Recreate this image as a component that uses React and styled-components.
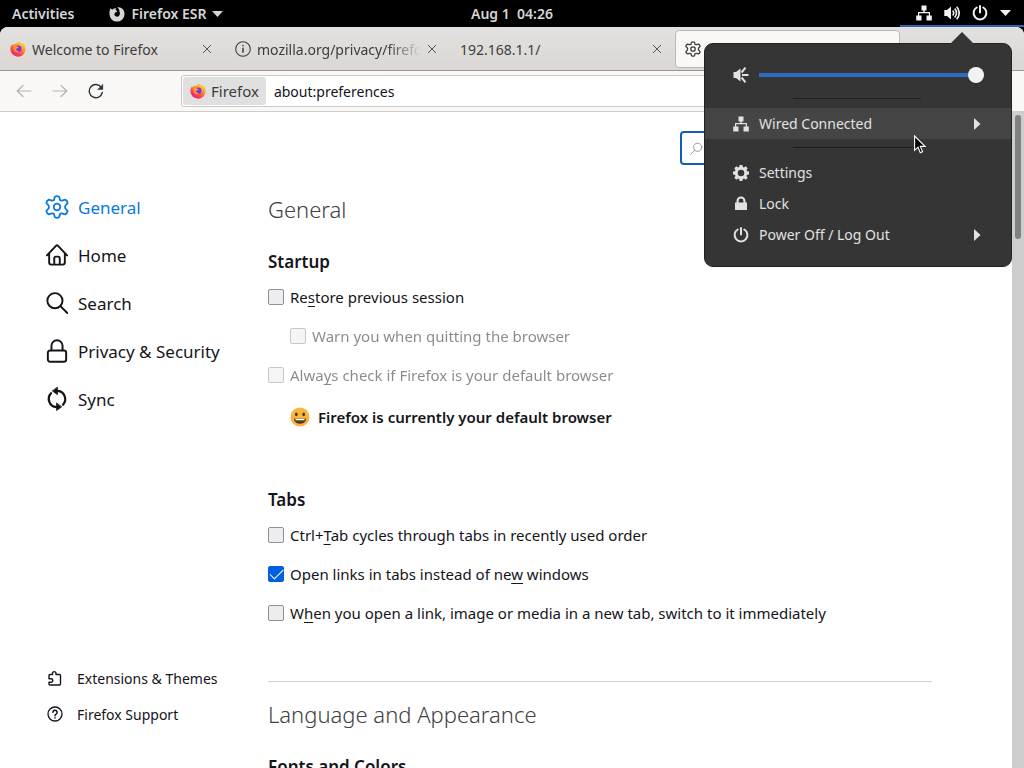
import React from 'react'
import styled, { createGlobalStyle, css } from 'styled-components'

const GlobalStyle = createGlobalStyle`
  * {
    box-sizing: border-box;
  }

  body {
    margin: 0;
    background: #000;
    color: #15141a;
    font-family: "Noto Sans", "Open Sans", sans-serif;
    font-size: 15px;
    overflow: hidden;
  }

  button, input {
    font: inherit;
    color: inherit;
  }

  button {
    border: 0;
    padding: 0;
    background: none;
  }

  h1, h2, p {
    margin: 0;
  }
`
const Desktop = styled.div`
  position: relative;
  display: flex;
  flex-direction: column;
  height: 100vh;
`

/* Top panel */
const TopBar = styled.header`
  display: grid;
  grid-template-columns: 1fr auto 1fr;
  height: 27px;
  color: #d6d6d6;
  font-size: 14px;
  font-weight: 600;
  line-height: 27px;
`
const TopGroup = styled.div`
  display: flex;
  gap: 35px;
  padding-left: 12px;
`
const TopButton = styled.button`
  display: flex;
  align-items: center;
  gap: 6px;
  line-height: 27px;
`
const StatusButton = styled.button`
  display: flex;
  align-items: center;
  justify-self: end;
  gap: 12px;
  width: 124px;
  padding-left: 16px;
  border-bottom: 2px solid #2f62b5;
  color: #f2f2f2;
`

/* Browser window */
const Window = styled.div`
  flex: 1;
  min-height: 0;
  display: flex;
  flex-direction: column;
  border-radius: 8px 8px 0 0;
  background: #fff;
  overflow: hidden;
`
const TabStrip = styled.nav`
  display: flex;
  flex: none;
  height: 44px;
  padding: 3px 0 2px;
  background: linear-gradient(#e3e1df, #dad7d4);
  border-bottom: 1px solid #9c9792;
`
const Tab = styled.div`
  display: flex;
  align-items: center;
  gap: 6px;
  flex: 0 1 225px;
  min-width: 0;
  padding: 0 12px 0 9px;
  color: #3d3d3d;
  font-size: 14px;
  border: 1px solid transparent;
  border-radius: 4px;

  ${props => props.$active && css`
    background: #f9f8f7;
    border-color: #bcb8b4;
  `}
`
const TabTitle = styled.span`
  flex: 1;
  overflow: hidden;
  white-space: nowrap;

  ${props => props.$fade && css`
    mask-image: linear-gradient(90deg, #000 80%, transparent);
  `}
`
const CloseButton = styled.button`
  display: flex;
  flex: none;
`
const Toolbar = styled.div`
  display: flex;
  flex: none;
  align-items: center;
  height: 41px;
  padding: 0 24px 0 16px;
  background: #f9f8f7;
  border-bottom: 1px solid #cfccc9;
`
const ToolButton = styled.button`
  display: flex;
  margin-right: 20px;
  color: ${props => (props.disabled ? '#b5b3b1' : '#2e3436')};
`
const UrlBar = styled.div`
  display: flex;
  align-items: center;
  flex: 1;
  height: 32px;
  margin-left: 57px;
  padding: 1px;
  background: #fff;
  border: 1px solid #cdc9c5;
  border-radius: 3px;
`
const Identity = styled.button`
  display: flex;
  align-items: center;
  gap: 5px;
  height: 28px;
  padding: 0 7px;
  background: #e0e0e0;
  border-radius: 3px;
  color: #3c3c3c;
  font-size: 15px;
`
const UrlInput = styled.input`
  flex: 1;
  min-width: 0;
  padding: 0 8px;
  border: 0;
  outline: 0;
  background: none;
  font-size: 14px;
`

/* Preferences page */
const Page = styled.div`
  flex: 1;
  display: flex;
  min-height: 0;
`
const Sidebar = styled.aside`
  display: flex;
  flex-direction: column;
  justify-content: space-between;
  flex: none;
  width: 268px;
  padding: 71px 0 36px 46px;
`
const NavItem = styled.a`
  display: flex;
  align-items: center;
  gap: 10px;
  height: 48px;
  color: ${props => (props.$active ? '#0a7ae0' : '#15141a')};
  font-size: 17px;
  text-decoration: none;
`
const NavIcon = styled.span`
  display: flex;
  justify-content: center;
  width: 22px;

  svg {
    flex: none;
  }
`
const FooterItem = styled(NavItem)`
  gap: 14px;
  height: 36px;
  padding-left: 1px;
  font-size: 14px;
`
const Content = styled.main`
  flex: 1;
  min-width: 0;
  padding: 19px 80px 0 0;
  overflow: hidden;
`
const SearchBox = styled.label`
  display: flex;
  align-items: center;
  gap: 8px;
  width: 252px;
  height: 34px;
  margin-left: auto;
  padding: 0 8px;
  border: 2px solid #0c60b5;
  border-radius: 4px;
  color: #9a9a9a;

  input {
    flex: 1;
    min-width: 0;
    border: 0;
    outline: 0;
  }
`
const Title = styled.h1`
  margin-top: ${props => (props.$divided ? '16px' : '28px')};
  color: #3f3e44;
  font-size: 22px;
  font-weight: 300;
  line-height: 32px;
`
const Section = styled.section`
  display: flex;
  flex-direction: column;
  margin-top: 25px;
  padding-bottom: ${props => props.$space}px;
`
const SectionTitle = styled.h2`
  margin-bottom: 11px;
  font-size: 17px;
  font-weight: 600;
  line-height: 24px;
`
const Options = styled.div`
  display: flex;
  flex-direction: column;
  gap: 15px;
`
const Option = styled.label`
  display: flex;
  align-items: center;
  gap: 6px;
  margin-left: ${props => (props.$nested ? '22px' : '0')};
  font-size: 15px;
  line-height: 24px;
  white-space: nowrap;
  opacity: ${props => (props.$disabled ? 0.5 : 1)};

  u {
    text-underline-offset: 3px;
    text-decoration-skip-ink: none;
  }
`
const Checkbox = styled.input.attrs({ type: 'checkbox' })`
  appearance: none;
  flex: none;
  display: flex;
  justify-content: center;
  width: 16px;
  height: 16px;
  margin: 0;
  background: #ededed;
  border: 1px solid #8f8f9d;
  border-radius: 2px;

  &:checked {
    background: #0060df;
    border-color: #0060df;
  }

  &:checked::before {
    content: "";
    width: 12px;
    height: 6px;
    margin-top: 2px;
    border: solid #fff;
    border-width: 0 0 1px 1px;
    transform: rotate(-45deg);
  }
`
const Message = styled.p`
  display: flex;
  align-items: center;
  gap: 8px;
  margin: 18px 0 0 22px;
  font-size: 15px;
  font-weight: 600;
  line-height: 24px;
`
const Divider = styled.hr`
  width: 100%;
  margin: 0;
  border: 0;
  border-top: 1px solid #cfcfd4;
`
const ScrollTrack = styled.div`
  flex: none;
  width: 12px;
  padding: 3px;
  background: #cdcdcd;
`
const ScrollThumb = styled.div`
  height: 19%;
  background: #7d8181;
  border-radius: 3px;
`

/* System menu */
const Menu = styled.div`
  position: absolute;
  top: 43px;
  right: 12px;
  width: 308px;
  padding: 15px 0 16px;
  background: #353535;
  border: 1px solid #222;
  border-radius: 9px;
  color: #e2e2e2;
  font-size: 14px;

  &::before {
    content: "";
    position: absolute;
    top: -12px;
    right: 37px;
    border: solid transparent;
    border-width: 0 12px 12px;
    border-bottom-color: #353535;
  }
`
const MenuRow = styled.div`
  display: flex;
  align-items: center;
  gap: 10px;
  width: 100%;
  height: 31px;
  padding: 0 27px 0 28px;
  text-align: left;
  background: ${props => (props.$hover ? '#454545' : 'none')};
`
const MenuLabel = styled.span`
  flex: 1;
`
const MenuSeparator = styled.hr`
  width: 128px;
  height: 1px;
  margin: 8px 0 9px 88px;
  border: 0;
  background: #1f1f1f;
`
const Volume = styled.input.attrs({ type: 'range' })`
  appearance: none;
  flex: 1;
  min-width: 0;
  height: 4px;
  margin: 0;
  background: #2d6bc0;

  &::-webkit-slider-thumb {
    appearance: none;
    width: 16px;
    height: 16px;
    border-radius: 50%;
    background: #f2f2f2;
  }
`
const Pointer = styled.svg`
  position: absolute;
  top: 135px;
  right: 98px;
`

/* Icons */
const Line = ({ size = 16, width = 1.3, children }) => (
  <svg width={size} height={size} viewBox="0 0 16 16" fill="none" stroke="currentColor" strokeWidth={width} strokeLinecap="round" strokeLinejoin="round">
    {children}
  </svg>
)

const Solid = ({ size = 16, children }) => (
  <svg width={size} height={size} viewBox="0 0 16 16" fill="currentColor">
    {children}
  </svg>
)

const FirefoxLogo = () => (
  <svg width="16" height="16" viewBox="0 0 16 16">
    <defs>
      <linearGradient id="flame" x1="0.85" y1="0.05" x2="0.25" y2="0.95">
        <stop offset="0" stopColor="#ffe03a" />
        <stop offset="0.4" stopColor="#ff9130" />
        <stop offset="0.75" stopColor="#fb3f4e" />
        <stop offset="1" stopColor="#e3228a" />
      </linearGradient>
    </defs>
    <path fill="url(#flame)" d="M.4 7.500C.5 5.600 1.200 4 2.100 3.200L2.300 4.200C3 3.400 4 3 5.200 3 6.600 1.600 8.500.9 10 .7 10 1.800 11.400 2.400 12.600 3.300 13 3 13 2.400 12.800 1.900 14.700 3.200 15.700 5.800 15.600 8.200A7.600 7.400 0 0 1 .4 8.300Z" />
    <circle cx="8.300" cy="7.800" r="3.200" fill="#7a39d6" />
    <path fill="#ff9a35" d="M3.500 5.200C5.500 4.500 7 5.300 8.800 6.300 8.300 7.300 6.800 7.200 6.200 8 5.900 9.500 7.200 10.500 9 10.200 7.500 12.300 4.300 11.200 3.700 8.500Z" />
  </svg>
)

const FirefoxSymbol = () => (
  <Solid>
    <path d="M1.500 2.200 3.300 3.700C4.300 2.600 5.800 1.900 7.200 1.900L6.500 3.500 8.300 5.500 6 6.800 5.300 8.600C6 10.800 8.500 11.300 10 9.900 11.500 8.300 11 6 9.900 4.800L10.600 4.700C10.100 3 9.200 2 8.200 1.400 12.500.7 15.700 4.200 15.500 8.200A7.500 7.400 0 0 1 .5 8.200C.3 6 .7 3.800 1.500 2.200Z" />
  </Solid>
)

const Network = () => (
  <Solid>
    <path d="M5.500.5h5v5H8.700V7H14v3.500h1.800v5h-5.300v-5h2.300V8.300H3.200v2.200h2.300v5H.2v-5H2V7h5.300V5.500H5.500z" />
  </Solid>
)

const Power = () => (
  <Line width={2}>
    <path d="M8 1v6.500M4.700 2.500a6.400 6.400 0 1 0 6.600 0" />
  </Line>
)

const Speaker = () => (
  <Solid>
    <path d="M.3 5H3L7 1.500v13L3 11H.3z" />
    <path d="M8.700 5.500q2 2.500 0 5M10.700 3.500q3.600 4.500 0 9M12.700 1.700q5 6.300 0 12.600" fill="none" stroke="currentColor" strokeWidth="1.600" />
  </Solid>
)

const SpeakerLow = () => (
  <Solid>
    <path d="M.5 5h2.500L7.500 1.500v13L3 11H.5z" />
    <path d="M8.500 5.500 12.500.7M9 8H15.500M8.500 10.500l4 4.800" fill="none" stroke="currentColor" strokeWidth="2" />
  </Solid>
)

const ArrowDown = () => (
  <svg width="11" height="6" viewBox="0 0 11 6" fill="currentColor">
    <path d="M0 0h11L5.500 6z" />
  </svg>
)

const ArrowRight = () => (
  <svg width="14" height="12" viewBox="0 0 14 12" fill="currentColor">
    <path d="M4 0v12L10.500 6z" />
  </svg>
)

const Close = () => (
  <svg width="10" height="10" viewBox="0 0 10 10" stroke="#555" strokeWidth="1">
    <path d="m1 1 8 8M9 1 1 9" />
  </svg>
)

const Gear = ({ size, width }) => (
  <Line size={size} width={width}>
    <circle cx="8" cy="8" r="2.200" />
    <path d="M6.500 1.300Q8 .3 9.500 1.300L10 3.300Q10.600 3.800 11.400 3.700L13.400 3.100Q14.900 3.700 15.100 5.400L13.600 7Q13.200 8 13.600 9L15.100 10.600Q14.900 12.300 13.400 12.900L11.400 12.300Q10.600 12.200 10 12.700L9.500 14.700Q8 15.700 6.500 14.700L6 12.700Q5.400 12.200 4.600 12.300L2.600 12.900Q1.100 12.300.9 10.600L2.400 9Q2.800 8 2.400 7L.9 5.400Q1.100 3.700 2.600 3.100L4.600 3.700Q5.400 3.800 6 3.300Z" />
  </Line>
)

const SettingsGear = () => (
  <Solid>
    <path fillRule="evenodd" d="M6.600 0h2.800l.4 2 1.200.5L12.700 1.300l2 2L13.500 5l.5 1.200 2 .4v2.800l-2 .4-.5 1.200 1.200 1.700-2 2L11 13.500l-1.200.5-.4 2H6.600l-.4-2-1.200-.5-1.700 1.200-2-2L2.500 11 2 9.800l-2-.4V6.600l2-.4L2.500 5 1.300 3.300l2-2L5 2.500 6.200 2zM8 4.700a3.300 3.300 0 1 0 0 6.600 3.300 3.300 0 0 0 0-6.600z" />
  </Solid>
)

const navItems = [
  { label: 'General', active: true, icon: <Gear size={24} width={1.2} /> },
  { label: 'Home', icon: <Line size={22} width={1.4}><path d="M.7 8.300 7.400 1.200Q8 .6 8.600 1.200L15.300 8.300M2.300 7V13.500Q2.300 15 3.800 15H12.200Q13.700 15 13.700 13.500V7M6 15V10.500Q6 9.200 7.200 9.200H8.800Q10 9.200 10 10.500V15" /></Line> },
  { label: 'Search', icon: <Line size={22} width={1.4}><circle cx="6.500" cy="6.300" r="5.500" /><path d="m10.500 10.300 5 5" /></Line> },
  { label: 'Privacy & Security', icon: <Line size={24} width={1.3}><rect x="1.900" y="7.700" width="12.200" height="7.500" rx="1.500" /><path d="M4.300 7.500V4.500a3.700 3.700 0 0 1 7.400 0v3" /></Line> },
  {
    label: 'Sync',
    icon: (
      <Line size={24} width={1.5}>
        <path d="M8.500 2.600A5.500 5.500 0 0 1 12 11.800M7.500 13.400A5.500 5.500 0 0 1 4 4.200" />
        <path d="M8.300.3v4.800L5 2.700zM7.700 10.900v4.800L11 13.300z" fill="currentColor" strokeWidth="0.500" />
      </Line>
    ),
  },
]

const tabs = [
  { title: 'Welcome to Firefox', icon: <FirefoxLogo /> },
  { title: 'mozilla.org/privacy/firefox', fade: true, icon: <Line width={1.1}><circle cx="8" cy="8" r="7.300" /><path d="M8 7.300v4M8 4.500v.2" strokeWidth="1.500" /></Line> },
  { title: '192.168.1.1/' },
  { title: 'Settings', active: true, icon: <Gear size={16} width={1.3} /> },
]

const App = () => (
  <Desktop>
    <GlobalStyle />
    <TopBar>
      <TopGroup>
        <TopButton>Activities</TopButton>
        <TopButton>
          <FirefoxSymbol />
          Firefox ESR
          <ArrowDown />
        </TopButton>
      </TopGroup>
      <TopButton>Aug 1&nbsp; 04:26</TopButton>
      <StatusButton aria-label="System">
        <Network />
        <Speaker />
        <Power />
        <ArrowDown />
      </StatusButton>
    </TopBar>

    <Window>
      <TabStrip>
        {tabs.map(tab => (
          <Tab key={tab.title} $active={tab.active}>
            {tab.icon}
            <TabTitle $fade={tab.fade}>{tab.active ? '' : tab.title}</TabTitle>
            <CloseButton aria-label="Close tab"><Close /></CloseButton>
          </Tab>
        ))}
      </TabStrip>
      <Toolbar>
        <ToolButton disabled aria-label="Back"><Line width={1.2}><path d="M15 8H1.200M7 2.500 1.200 8 7 13.500" /></Line></ToolButton>
        <ToolButton disabled aria-label="Forward"><Line width={1.2}><path d="M1 8h13.800M9 2.500 14.800 8 9 13.500" /></Line></ToolButton>
        <ToolButton aria-label="Reload"><Line width={1.4}><path d="M14.300 9.500A6.600 6.600 0 1 1 13.300 4.300" /><path d="M14.800 1.500V6.500H9.800z" fill="currentColor" strokeWidth="0.500" /></Line></ToolButton>
        <UrlBar>
          <Identity><FirefoxLogo />Firefox</Identity>
          <UrlInput aria-label="Address" defaultValue="about:preferences" />
        </UrlBar>
      </Toolbar>

      <Page>
        <Sidebar>
          <nav>
            {navItems.map(item => (
              <NavItem key={item.label} href="#" $active={item.active}>
                <NavIcon>{item.icon}</NavIcon>
                {item.label}
              </NavItem>
            ))}
          </nav>
          <div>
            <FooterItem href="#">
              <Line width={1.4}><path d="M2 5.500Q2 4.500 3 4.500H5.500V3A1.800 1.800 0 0 1 9 3V4.500H12.500Q13.500 4.500 13.500 5.500V14Q13.500 15 12.500 15H3Q2 15 2 14V12.300H4A1.700 1.700 0 0 0 4 8.700H2Z" /></Line>
              Extensions &amp; Themes
            </FooterItem>
            <FooterItem href="#">
              <Line><circle cx="8" cy="8" r="7" /><path d="M5.900 6.300a2.100 2.100 0 1 1 3.200 1.800Q8 8.700 8 9.700M8 11.800v.2" strokeWidth="1.500" /></Line>
              Firefox Support
            </FooterItem>
          </div>
        </Sidebar>

        <Content>
          <SearchBox>
            <Line size={13} width={1.2}><circle cx="9.500" cy="6.500" r="5" /><path d="m5.800 10.200-5 5" /></Line>
            <input aria-label="Find in Settings" />
          </SearchBox>
          <Title>General</Title>

          <Section $space={34}>
            <SectionTitle>Startup</SectionTitle>
            <Options>
              <Option><Checkbox /><span>Re<u>s</u>tore previous session</span></Option>
              <Option $nested $disabled><Checkbox disabled /><span>Warn you when quitting the browser</span></Option>
              <Option $disabled><Checkbox disabled /><span>Alwa<u>y</u>s check if Firefox is your default browser</span></Option>
            </Options>
            <Message>
              <svg width="20" height="20" viewBox="0 0 20 20">
                <circle cx="10" cy="10" r="9.500" fill="#f6b73c" />
                <ellipse cx="6.300" cy="7.300" rx="1.300" ry="1.900" fill="#4b3522" />
                <ellipse cx="13.700" cy="7.300" rx="1.300" ry="1.900" fill="#4b3522" />
                <path d="M3.800 11.500h12.400a6.200 5.300 0 0 1-12.400 0z" fill="#5b3a20" />
                <path d="M5 11.700h10l-.8 1.500H5.800z" fill="#fff" />
              </svg>
              Firefox is currently your default browser
            </Message>
          </Section>

          <Section $space={56}>
            <SectionTitle>Tabs</SectionTitle>
            <Options>
              <Option><Checkbox /><span>Ctrl+<u>T</u>ab cycles through tabs in recently used order</span></Option>
              <Option><Checkbox defaultChecked /><span>Open links in tabs instead of ne<u>w</u> windows</span></Option>
              <Option><Checkbox /><span>W<u>h</u>en you open a link, image or media in a new tab, switch to it immediately</span></Option>
            </Options>
          </Section>

          <Divider />
          <Title $divided>Language and Appearance</Title>
          <Section $space={0}>
            <SectionTitle>Fonts and Colors</SectionTitle>
          </Section>
        </Content>
        <ScrollTrack><ScrollThumb /></ScrollTrack>
      </Page>
    </Window>

    <Menu>
      <MenuRow>
        <SpeakerLow />
        <Volume aria-label="Volume" defaultValue={100} />
      </MenuRow>
      <MenuSeparator />
      <MenuRow as="button" $hover>
        <Network />
        <MenuLabel>Wired Connected</MenuLabel>
        <ArrowRight />
      </MenuRow>
      <MenuSeparator />
      <MenuRow as="button">
        <SettingsGear />
        <MenuLabel>Settings</MenuLabel>
      </MenuRow>
      <MenuRow as="button">
        <Solid><path fillRule="evenodd" d="M2 6.500h1.500V5a4.500 4.500 0 0 1 9 0v1.500H14V14H2zM5.600 6.500h4.800V5a2.400 2.400 0 0 0-4.800 0z" /></Solid>
        <MenuLabel>Lock</MenuLabel>
      </MenuRow>
      <MenuRow as="button">
        <Power />
        <MenuLabel>Power Off / Log Out</MenuLabel>
        <ArrowRight />
      </MenuRow>
    </Menu>

    <Pointer width="12" height="19" viewBox="0 0 12 19">
      <path d="M.6 1v14.300L4 12.200l2.300 5.600 2.300-1-2.300-5.400h4.800z" fill="#000" stroke="#fff" strokeWidth="1.100" />
    </Pointer>
  </Desktop>
)

export default App
